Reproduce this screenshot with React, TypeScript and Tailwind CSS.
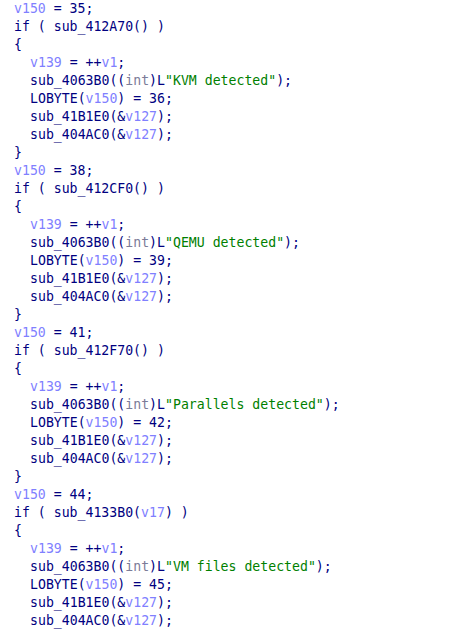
import React from "react";

type Tok = [string, string];
const N = "text-[#000080]";
const V = "text-[#8080ff]";
const S = "text-[#008000]";
const T = "text-[#7c7c98]";

const line = (indent: number, toks: Tok[]) => ({ indent, toks });

function block(num: number, cond: Tok[], msg: string) {
  return [
    line(0, [[V, "v150"], [N, ` = ${num};`]]),
    line(0, [[N, "if ( "], ...cond, [N, " )"]]),
    line(0, [[N, "{"]]),
    line(1, [[V, "v139"], [N, " = ++"], [V, "v1"], [N, ";"]]),
    line(1, [[N, "sub_4063B0(("], [T, "int"], [N, ")L"], [S, `"${msg}"`], [N, ");"]]),
    line(1, [[N, "LOBYTE("], [V, "v150"], [N, `) = ${num + 1};`]]),
    line(1, [[N, "sub_41B1E0(&"], [V, "v127"], [N, ");"]]),
    line(1, [[N, "sub_404AC0(&"], [V, "v127"], [N, ");"]]),
  ];
}

const lines = [
  ...block(35, [[N, "sub_412A70()"]], "KVM detected"),
  line(0, [[N, "}"]]),
  ...block(38, [[N, "sub_412CF0()"]], "QEMU detected"),
  line(0, [[N, "}"]]),
  ...block(41, [[N, "sub_412F70()"]], "Parallels detected"),
  line(0, [[N, "}"]]),
  ...block(44, [[N, "sub_4133B0("], [V, "v17"], [N, ")"]], "VM files detected"),
];

export default function App() {
  return (
    <div className="w-[450px] h-[631px] bg-white overflow-hidden pl-[14px] font-['DejaVu_Sans_Mono',monospace] text-[13.2px] leading-[18px] whitespace-pre">
      {lines.map((l, i) => (
        <div key={i} className={l.indent ? "pl-[16px]" : ""}>
          {l.toks.map((t, j) => (
            <span key={j} className={t[0]}>
              {t[1]}
            </span>
          ))}
        </div>
      ))}
    </div>
  );
}
